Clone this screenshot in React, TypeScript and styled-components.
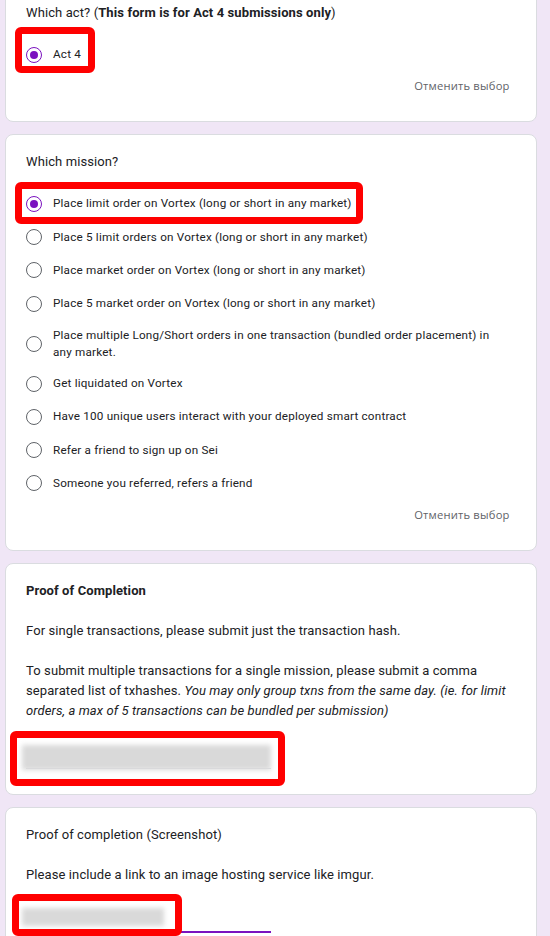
import styled, { createGlobalStyle } from "styled-components";

const accent = "#7b12bf";

const GlobalStyle = createGlobalStyle`
  html, body {
    margin: 0;
    padding: 0;
    background: #f0e6f6;
  }
  body {
    font-family: Roboto, "Liberation Sans", Arial, sans-serif;
    color: #202124;
    overflow: hidden;
  }
`;

interface optionProps {
  label: string;
  checked?: boolean;
}

const actOptions: optionProps[] = [{ label: "Act 4", checked: true }];

const missionOptions: optionProps[] = [
  { label: "Place limit order on Vortex (long or short in any market)", checked: true },
  { label: "Place 5 limit orders on Vortex (long or short in any market)" },
  { label: "Place market order on Vortex (long or short in any market)" },
  { label: "Place 5 market order on Vortex (long or short in any market)" },
  {
    label:
      "Place multiple Long/Short orders in one transaction (bundled order placement) in any market.",
  },
  { label: "Get liquidated on Vortex" },
  { label: "Have 100 unique users interact with your deployed smart contract" },
  { label: "Refer a friend to sign up on Sei" },
  { label: "Someone you referred, refers a friend" },
];

const RadioGroup = ({ options }: { options: optionProps[] }): JSX.Element => {
  return (
    <>
      <Options>
        {options.map((o) => (
          <OptionRow key={o.label}>
            <Radio $checked={!!o.checked} />
            <OptionText>{o.label}</OptionText>
          </OptionRow>
        ))}
      </Options>
      <ClearRow>
        <ClearButton type="button">Отменить выбор</ClearButton>
      </ClearRow>
    </>
  );
};

const App = (): JSX.Element => {
  return (
    <>
      <GlobalStyle />
      <Page>
        <Card>
          <Title>
            Which act? (<b>This form is for Act 4 submissions only</b>)
          </Title>
          <RadioGroup options={actOptions} />
          <Annotation $top={41} $left={9} $width={80} $height={46} />
        </Card>

        <Card>
          <Title>Which mission?</Title>
          <RadioGroup options={missionOptions} />
          <Annotation $top={47} $left={9} $width={348} $height={42} />
        </Card>

        <Card>
          <Title>
            <b>Proof of Completion</b>
            <br />
            <br />
            For single transactions, please submit just the transaction hash.
            <br />
            <br />
            To submit multiple transactions for a single mission, please submit a
            comma separated list of txhashes. <i>You may only group txns from the
            same day. (ie. for limit orders, a max of 5 transactions can be
            bundled per submission)</i>
          </Title>
          <Field>
            <Redacted $top={10} $width={249} $height={25} />
          </Field>
          <Annotation $top={167} $left={4} $width={275} $height={55} />
        </Card>

        <Card>
          <Title>
            Proof of completion (Screenshot)
            <br />
            <br />
            Please include a link to an image hosting service like imgur.
          </Title>
          <Field $focused>
            <Redacted $top={9} $width={142} $height={18} />
          </Field>
          <Annotation $top={86} $left={6} $width={170} $height={42} />
        </Card>
      </Page>
    </>
  );
};

const Page = styled.main`
  display: flex;
  flex-direction: column;
  gap: 12px;
  width: 532px;
  margin: -15px 0 0 5px;
  padding-bottom: 40px;
`;

const Card = styled.section`
  position: relative;
  background: #fff;
  border: 1px solid #dadce0;
  border-radius: 8px;
  padding: 17px 20px 21px;
`;

const Title = styled.div`
  font-size: 13px;
  line-height: 20px;
  letter-spacing: 0.1px;

  b {
    font-weight: 700;
  }
`;

const Options = styled.div`
  display: flex;
  flex-direction: column;
  margin-top: 15px;
`;

const OptionRow = styled.label`
  display: flex;
  align-items: center;
  padding: 6.4px 0;
  cursor: pointer;
`;

const Radio = styled.span<{ $checked: boolean }>`
  flex: none;
  box-sizing: border-box;
  width: 16px;
  height: 16px;
  margin: 2.25px 11px 2.25px 0;
  border-radius: 50%;
  border: 1.6px solid ${(p) => (p.$checked ? accent : "#5f6368")};
  display: flex;
  align-items: center;
  justify-content: center;

  &::after {
    content: "";
    display: ${(p) => (p.$checked ? "block" : "none")};
    width: 8px;
    height: 8px;
    border-radius: 50%;
    background: ${accent};
  }
`;

const OptionText = styled.span`
  font-size: 11.7px;
  line-height: 17px;
  letter-spacing: 0.2px;
  padding-right: 16px;
`;

const ClearRow = styled.div`
  display: flex;
  justify-content: flex-end;
`;

const ClearButton = styled.button`
  height: 28.8px;
  padding: 0 6.4px;
  border: none;
  background: none;
  font-family: "Open Sans", Roboto, sans-serif;
  font-size: 11.2px;
  font-weight: 500;
  color: #5f6368;
  letter-spacing: 0.2px;
  cursor: pointer;
`;

const Field = styled.div<{ $focused?: boolean }>`
  box-sizing: border-box;
  width: 50%;
  height: 34px;
  margin: 14px 0 4px;
  display: flex;
  align-items: flex-start;
  border-bottom: ${(p) => (p.$focused ? `2px solid ${accent}` : "1px solid #dadce0")};
`;

const Redacted = styled.span<{ $top: number; $width: number; $height: number }>`
  display: block;
  margin: ${(p) => p.$top}px 0 0 -4px;
  width: ${(p) => p.$width}px;
  height: ${(p) => p.$height}px;
  background: #d9d9d9;
  filter: blur(2.5px);
`;

const Annotation = styled.div<{
  $top: number;
  $left: number;
  $width: number;
  $height: number;
}>`
  position: absolute;
  top: ${(p) => p.$top}px;
  left: ${(p) => p.$left}px;
  width: ${(p) => p.$width}px;
  height: ${(p) => p.$height}px;
  box-sizing: border-box;
  border: 7px solid #ff0000;
  border-radius: 6px;
  pointer-events: none;
`;

export default App;
